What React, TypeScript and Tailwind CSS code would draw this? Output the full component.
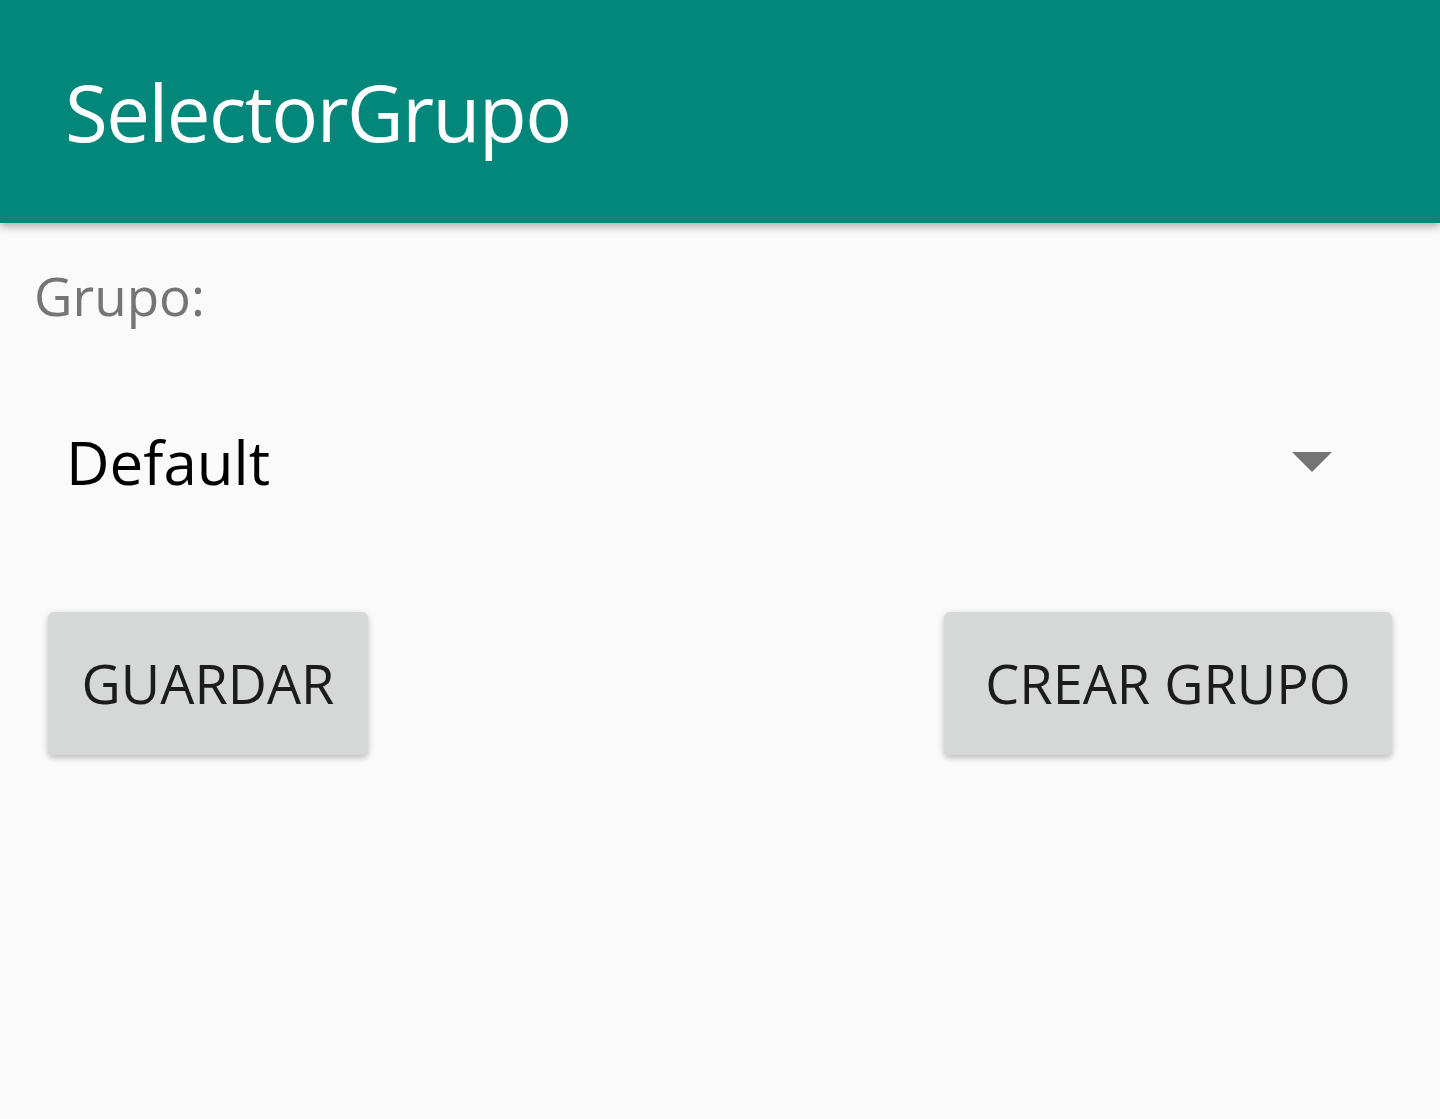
export default function App() {
  return (
    <div className="min-h-[1119px] w-[1440px] bg-[#fafafa] font-['Open_Sans',sans-serif]">
      {/* Toolbar */}
      <header className="relative z-10 flex h-[223px] items-center bg-[#02877a] pl-[65px] shadow-[0_4px_8px_rgba(0,0,0,0.3)]">
        <h1 className="text-[78px] leading-none text-white tracking-[-1.5px]">SelectorGrupo</h1>
      </header>

      <main className="px-[34px]">
        <p className="mt-[46px] text-[53px] leading-none text-[#757575]">Grupo:</p>

        {/* Spinner */}
        <div className="mt-[110px] flex items-center justify-between pl-[32px] pr-[74px]">
          <span className="text-[60px] leading-none text-black">Default</span>
          <svg width="40" height="20" viewBox="0 0 40 20">
            <polygon points="0,0 40,0 20,20" fill="#757575" />
          </svg>
        </div>

        {/* Buttons */}
        <div className="mt-[120px] flex justify-between px-[14px]">
          <button className="flex h-[143px] w-[320px] items-center justify-center rounded-[6px] bg-[#d6d7d7] text-[54px] text-[#1c1c1c] shadow-[0_3px_6px_rgba(0,0,0,0.25)]">
            GUARDAR
          </button>
          <button className="flex h-[143px] w-[448px] items-center justify-center rounded-[6px] bg-[#d6d7d7] text-[54px] text-[#1c1c1c] shadow-[0_3px_6px_rgba(0,0,0,0.25)]">
            CREAR GRUPO
          </button>
        </div>
      </main>
    </div>
  );
}
